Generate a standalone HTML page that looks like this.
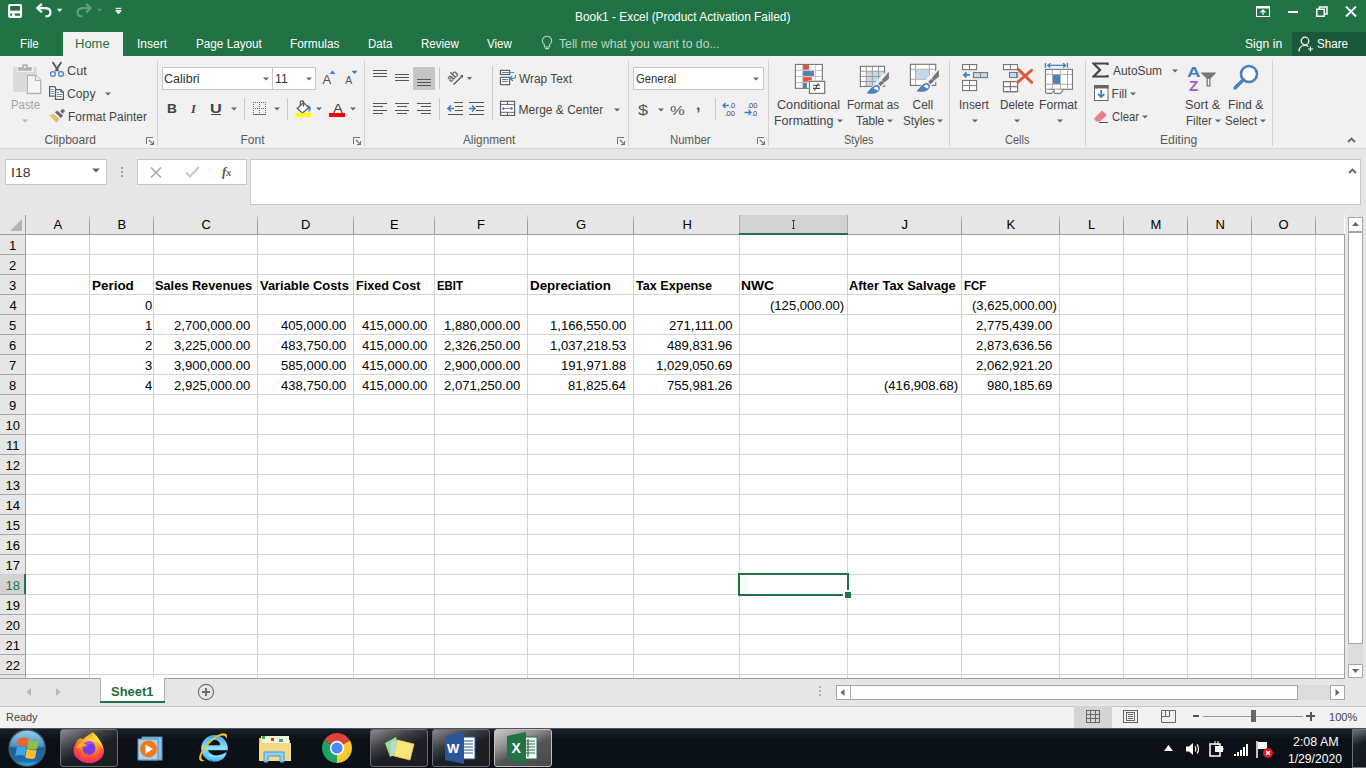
<!DOCTYPE html>
<html><head><meta charset="utf-8"><style>
html,body{margin:0;padding:0}
body{width:1366px;height:768px;position:relative;overflow:hidden;background:#fff;font-family:"Liberation Sans",sans-serif}
div{position:absolute;box-sizing:border-box}
.t{position:absolute;white-space:nowrap;line-height:0;display:block}
</style></head><body>
<div style="left:0px;top:0px;width:1366px;height:56px;background:#217346"></div>
<div style="left:0px;top:56px;width:1366px;height:92px;background:#f1f1f1"></div>
<div style="left:0px;top:148px;width:1366px;height:1px;background:#d5d5d5"></div>
<div style="left:0px;top:149px;width:1366px;height:66px;background:#e6e6e6"></div>
<div style="left:5px;top:159px;width:102px;height:26px;background:#fff;border:1px solid #c6c6c6"></div>
<div style="left:137px;top:159px;width:110px;height:26px;background:#fff;border:1px solid #c6c6c6"></div>
<div style="left:250px;top:159px;width:1111px;height:46px;background:#fff;border:1px solid #c6c6c6"></div>
<div style="left:0px;top:215px;width:1344px;height:19px;background:#e6e6e6"></div>
<div style="left:0px;top:234px;width:25px;height:444px;background:#e6e6e6"></div>
<div style="left:0px;top:234px;width:1344px;height:1px;background:#9e9e9e"></div>
<div style="left:0px;top:254px;width:25px;height:1px;background:#a8a8a8"></div>
<div style="left:26px;top:254px;width:1318px;height:1px;background:#d4d4d4"></div>
<div style="left:0px;top:274px;width:25px;height:1px;background:#a8a8a8"></div>
<div style="left:26px;top:274px;width:1318px;height:1px;background:#d4d4d4"></div>
<div style="left:0px;top:294px;width:25px;height:1px;background:#a8a8a8"></div>
<div style="left:26px;top:294px;width:1318px;height:1px;background:#d4d4d4"></div>
<div style="left:0px;top:314px;width:25px;height:1px;background:#a8a8a8"></div>
<div style="left:26px;top:314px;width:1318px;height:1px;background:#d4d4d4"></div>
<div style="left:0px;top:334px;width:25px;height:1px;background:#a8a8a8"></div>
<div style="left:26px;top:334px;width:1318px;height:1px;background:#d4d4d4"></div>
<div style="left:0px;top:354px;width:25px;height:1px;background:#a8a8a8"></div>
<div style="left:26px;top:354px;width:1318px;height:1px;background:#d4d4d4"></div>
<div style="left:0px;top:374px;width:25px;height:1px;background:#a8a8a8"></div>
<div style="left:26px;top:374px;width:1318px;height:1px;background:#d4d4d4"></div>
<div style="left:0px;top:394px;width:25px;height:1px;background:#a8a8a8"></div>
<div style="left:26px;top:394px;width:1318px;height:1px;background:#d4d4d4"></div>
<div style="left:0px;top:414px;width:25px;height:1px;background:#a8a8a8"></div>
<div style="left:26px;top:414px;width:1318px;height:1px;background:#d4d4d4"></div>
<div style="left:0px;top:434px;width:25px;height:1px;background:#a8a8a8"></div>
<div style="left:26px;top:434px;width:1318px;height:1px;background:#d4d4d4"></div>
<div style="left:0px;top:454px;width:25px;height:1px;background:#a8a8a8"></div>
<div style="left:26px;top:454px;width:1318px;height:1px;background:#d4d4d4"></div>
<div style="left:0px;top:474px;width:25px;height:1px;background:#a8a8a8"></div>
<div style="left:26px;top:474px;width:1318px;height:1px;background:#d4d4d4"></div>
<div style="left:0px;top:494px;width:25px;height:1px;background:#a8a8a8"></div>
<div style="left:26px;top:494px;width:1318px;height:1px;background:#d4d4d4"></div>
<div style="left:0px;top:514px;width:25px;height:1px;background:#a8a8a8"></div>
<div style="left:26px;top:514px;width:1318px;height:1px;background:#d4d4d4"></div>
<div style="left:0px;top:534px;width:25px;height:1px;background:#a8a8a8"></div>
<div style="left:26px;top:534px;width:1318px;height:1px;background:#d4d4d4"></div>
<div style="left:0px;top:554px;width:25px;height:1px;background:#a8a8a8"></div>
<div style="left:26px;top:554px;width:1318px;height:1px;background:#d4d4d4"></div>
<div style="left:0px;top:574px;width:25px;height:1px;background:#a8a8a8"></div>
<div style="left:26px;top:574px;width:1318px;height:1px;background:#d4d4d4"></div>
<div style="left:0px;top:594px;width:25px;height:1px;background:#a8a8a8"></div>
<div style="left:26px;top:594px;width:1318px;height:1px;background:#d4d4d4"></div>
<div style="left:0px;top:614px;width:25px;height:1px;background:#a8a8a8"></div>
<div style="left:26px;top:614px;width:1318px;height:1px;background:#d4d4d4"></div>
<div style="left:0px;top:634px;width:25px;height:1px;background:#a8a8a8"></div>
<div style="left:26px;top:634px;width:1318px;height:1px;background:#d4d4d4"></div>
<div style="left:0px;top:654px;width:25px;height:1px;background:#a8a8a8"></div>
<div style="left:26px;top:654px;width:1318px;height:1px;background:#d4d4d4"></div>
<div style="left:0px;top:674px;width:25px;height:1px;background:#a8a8a8"></div>
<div style="left:26px;top:674px;width:1318px;height:1px;background:#d4d4d4"></div>
<div style="left:25px;top:215px;width:1px;height:463px;background:#9e9e9e"></div>
<div style="left:89px;top:215px;width:1px;height:19px;background:linear-gradient(#d0d0d0,#a0a0a0 40%,#9a9a9a)"></div>
<div style="left:89px;top:235px;width:1px;height:443px;background:#d4d4d4"></div>
<div style="left:153px;top:215px;width:1px;height:19px;background:linear-gradient(#d0d0d0,#a0a0a0 40%,#9a9a9a)"></div>
<div style="left:153px;top:235px;width:1px;height:443px;background:#d4d4d4"></div>
<div style="left:257px;top:215px;width:1px;height:19px;background:linear-gradient(#d0d0d0,#a0a0a0 40%,#9a9a9a)"></div>
<div style="left:257px;top:235px;width:1px;height:443px;background:#d4d4d4"></div>
<div style="left:353px;top:215px;width:1px;height:19px;background:linear-gradient(#d0d0d0,#a0a0a0 40%,#9a9a9a)"></div>
<div style="left:353px;top:235px;width:1px;height:443px;background:#d4d4d4"></div>
<div style="left:434px;top:215px;width:1px;height:19px;background:linear-gradient(#d0d0d0,#a0a0a0 40%,#9a9a9a)"></div>
<div style="left:434px;top:235px;width:1px;height:443px;background:#d4d4d4"></div>
<div style="left:527px;top:215px;width:1px;height:19px;background:linear-gradient(#d0d0d0,#a0a0a0 40%,#9a9a9a)"></div>
<div style="left:527px;top:235px;width:1px;height:443px;background:#d4d4d4"></div>
<div style="left:633px;top:215px;width:1px;height:19px;background:linear-gradient(#d0d0d0,#a0a0a0 40%,#9a9a9a)"></div>
<div style="left:633px;top:235px;width:1px;height:443px;background:#d4d4d4"></div>
<div style="left:739px;top:215px;width:1px;height:19px;background:linear-gradient(#d0d0d0,#a0a0a0 40%,#9a9a9a)"></div>
<div style="left:739px;top:235px;width:1px;height:443px;background:#d4d4d4"></div>
<div style="left:847px;top:215px;width:1px;height:19px;background:linear-gradient(#d0d0d0,#a0a0a0 40%,#9a9a9a)"></div>
<div style="left:847px;top:235px;width:1px;height:443px;background:#d4d4d4"></div>
<div style="left:961px;top:215px;width:1px;height:19px;background:linear-gradient(#d0d0d0,#a0a0a0 40%,#9a9a9a)"></div>
<div style="left:961px;top:235px;width:1px;height:443px;background:#d4d4d4"></div>
<div style="left:1059px;top:215px;width:1px;height:19px;background:linear-gradient(#d0d0d0,#a0a0a0 40%,#9a9a9a)"></div>
<div style="left:1059px;top:235px;width:1px;height:443px;background:#d4d4d4"></div>
<div style="left:1123px;top:215px;width:1px;height:19px;background:linear-gradient(#d0d0d0,#a0a0a0 40%,#9a9a9a)"></div>
<div style="left:1123px;top:235px;width:1px;height:443px;background:#d4d4d4"></div>
<div style="left:1187px;top:215px;width:1px;height:19px;background:linear-gradient(#d0d0d0,#a0a0a0 40%,#9a9a9a)"></div>
<div style="left:1187px;top:235px;width:1px;height:443px;background:#d4d4d4"></div>
<div style="left:1251px;top:215px;width:1px;height:19px;background:linear-gradient(#d0d0d0,#a0a0a0 40%,#9a9a9a)"></div>
<div style="left:1251px;top:235px;width:1px;height:443px;background:#d4d4d4"></div>
<div style="left:1315px;top:215px;width:1px;height:19px;background:linear-gradient(#d0d0d0,#a0a0a0 40%,#9a9a9a)"></div>
<div style="left:1315px;top:235px;width:1px;height:443px;background:#d4d4d4"></div>
<div style="left:739px;top:215px;width:109px;height:19px;background:#d2d2d2;border-left:1px solid #ababab;border-right:1px solid #ababab"></div>
<div style="left:739px;top:233px;width:109px;height:2px;background:#217346"></div>
<div style="left:0px;top:574px;width:25px;height:20px;background:#d2d2d2"></div>
<div style="left:24px;top:574px;width:2px;height:20px;background:#217346"></div>
<span class="t" style="left:53.50px;top:225.00px;font-size:13px;color:#000;">A</span>
<span class="t" style="left:117.50px;top:225.00px;font-size:13px;color:#000;">B</span>
<span class="t" style="left:201.50px;top:225.00px;font-size:13px;color:#000;">C</span>
<span class="t" style="left:301.00px;top:225.00px;font-size:13px;color:#000;">D</span>
<span class="t" style="left:390.00px;top:225.00px;font-size:13px;color:#000;">E</span>
<span class="t" style="left:477.00px;top:225.00px;font-size:13px;color:#000;">F</span>
<span class="t" style="left:576.00px;top:225.00px;font-size:13px;color:#000;">G</span>
<span class="t" style="left:682.50px;top:225.00px;font-size:13px;color:#000;">H</span>
<div style="left:792px;top:220px;width:3px;height:1px;background:#26543a"></div><div style="left:793px;top:220px;width:1.3px;height:9px;background:#26543a"></div><div style="left:792px;top:228px;width:3px;height:1px;background:#26543a"></div>
<span class="t" style="left:901.50px;top:225.00px;font-size:13px;color:#000;">J</span>
<span class="t" style="left:1006.50px;top:225.00px;font-size:13px;color:#000;">K</span>
<span class="t" style="left:1088.00px;top:225.00px;font-size:13px;color:#000;">L</span>
<span class="t" style="left:1150.50px;top:225.00px;font-size:13px;color:#000;">M</span>
<span class="t" style="left:1215.50px;top:225.00px;font-size:13px;color:#000;">N</span>
<span class="t" style="left:1278.50px;top:225.00px;font-size:13px;color:#000;">O</span>
<span class="t" style="left:9.00px;top:246.00px;font-size:13px;color:#000;">1</span>
<span class="t" style="left:9.00px;top:266.00px;font-size:13px;color:#000;">2</span>
<span class="t" style="left:9.00px;top:286.00px;font-size:13px;color:#000;">3</span>
<span class="t" style="left:9.50px;top:306.00px;font-size:13px;color:#000;">4</span>
<span class="t" style="left:9.00px;top:326.00px;font-size:13px;color:#000;">5</span>
<span class="t" style="left:9.00px;top:346.00px;font-size:13px;color:#000;">6</span>
<span class="t" style="left:9.00px;top:366.00px;font-size:13px;color:#000;">7</span>
<span class="t" style="left:9.00px;top:386.00px;font-size:13px;color:#000;">8</span>
<span class="t" style="left:9.00px;top:406.00px;font-size:13px;color:#000;">9</span>
<span class="t" style="left:5.50px;top:426.00px;font-size:13px;color:#000;">10</span>
<span class="t" style="left:6.00px;top:446.00px;font-size:13px;color:#000;">11</span>
<span class="t" style="left:5.50px;top:466.00px;font-size:13px;color:#000;">12</span>
<span class="t" style="left:5.50px;top:486.00px;font-size:13px;color:#000;">13</span>
<span class="t" style="left:5.50px;top:506.00px;font-size:13px;color:#000;">14</span>
<span class="t" style="left:5.50px;top:526.00px;font-size:13px;color:#000;">15</span>
<span class="t" style="left:5.50px;top:546.00px;font-size:13px;color:#000;">16</span>
<span class="t" style="left:5.50px;top:566.00px;font-size:13px;color:#000;">17</span>
<span class="t" style="left:5.50px;top:586.00px;font-size:13px;color:#217346;">18</span>
<span class="t" style="left:5.50px;top:606.00px;font-size:13px;color:#000;">19</span>
<span class="t" style="left:5.50px;top:626.00px;font-size:13px;color:#000;">20</span>
<span class="t" style="left:5.50px;top:646.00px;font-size:13px;color:#000;">21</span>
<span class="t" style="left:5.50px;top:666.00px;font-size:13px;color:#000;">22</span>
<div style="left:738px;top:573px;width:111px;height:23px;border:2px solid #217346"></div>
<div style="left:843px;top:590px;width:8px;height:8px;background:#fff"></div>
<div style="left:844.5px;top:591.5px;width:6px;height:6px;background:#217346"></div>
<span class="t" style="left:91.60px;top:286.00px;font-size:13.5px;color:#000;font-weight:bold;transform:scaleX(0.9950);transform-origin:left;">Period</span>
<span class="t" style="left:155.05px;top:286.00px;font-size:13.5px;color:#000;font-weight:bold;transform:scaleX(0.9455);transform-origin:left;">Sales Revenues</span>
<span class="t" style="left:259.90px;top:286.00px;font-size:13.5px;color:#000;font-weight:bold;transform:scaleX(0.9543);transform-origin:left;">Variable Costs</span>
<span class="t" style="left:355.77px;top:286.00px;font-size:13.5px;color:#000;font-weight:bold;transform:scaleX(0.9324);transform-origin:left;">Fixed Cost</span>
<span class="t" style="left:436.86px;top:286.00px;font-size:13.5px;color:#000;font-weight:bold;transform:scaleX(0.8400);transform-origin:left;">EBIT</span>
<span class="t" style="left:529.61px;top:286.00px;font-size:13.5px;color:#000;font-weight:bold;transform:scaleX(0.9888);transform-origin:left;">Depreciation</span>
<span class="t" style="left:635.80px;top:286.00px;font-size:13.5px;color:#000;font-weight:bold;transform:scaleX(0.9333);transform-origin:left;">Tax Expense</span>
<span class="t" style="left:741.47px;top:286.00px;font-size:13.5px;color:#000;font-weight:bold;transform:scaleX(1.0258);transform-origin:left;">NWC</span>
<span class="t" style="left:848.95px;top:286.00px;font-size:13.5px;color:#000;font-weight:bold;transform:scaleX(0.9505);transform-origin:left;">After Tax Salvage</span>
<span class="t" style="left:963.65px;top:286.00px;font-size:13.5px;color:#000;font-weight:bold;transform:scaleX(0.8520);transform-origin:left;">FCF</span>
<span class="t" style="left:144.53px;top:306.00px;font-size:13.5px;color:#000;transform:scaleX(0.9675);transform-origin:left;">0</span>
<span class="t" style="left:770.17px;top:306.00px;font-size:13.5px;color:#000;transform:scaleX(0.9675);transform-origin:left;">(125,000.00)</span>
<span class="t" style="left:971.52px;top:306.00px;font-size:13.5px;color:#000;transform:scaleX(0.9675);transform-origin:left;">(3,625,000.00)</span>
<span class="t" style="left:144.53px;top:326.00px;font-size:13.5px;color:#000;transform:scaleX(0.9675);transform-origin:left;">1</span>
<span class="t" style="left:174.13px;top:326.00px;font-size:13.5px;color:#000;transform:scaleX(0.9675);transform-origin:left;">2,700,000.00</span>
<span class="t" style="left:280.78px;top:326.00px;font-size:13.5px;color:#000;transform:scaleX(0.9675);transform-origin:left;">405,000.00</span>
<span class="t" style="left:361.78px;top:326.00px;font-size:13.5px;color:#000;transform:scaleX(0.9675);transform-origin:left;">415,000.00</span>
<span class="t" style="left:444.13px;top:326.00px;font-size:13.5px;color:#000;transform:scaleX(0.9675);transform-origin:left;">1,880,000.00</span>
<span class="t" style="left:550.13px;top:326.00px;font-size:13.5px;color:#000;transform:scaleX(0.9675);transform-origin:left;">1,166,550.00</span>
<span class="t" style="left:668.71px;top:326.00px;font-size:13.5px;color:#000;transform:scaleX(0.9675);transform-origin:left;">271,111.00</span>
<span class="t" style="left:976.13px;top:326.00px;font-size:13.5px;color:#000;transform:scaleX(0.9675);transform-origin:left;">2,775,439.00</span>
<span class="t" style="left:144.53px;top:346.00px;font-size:13.5px;color:#000;transform:scaleX(0.9675);transform-origin:left;">2</span>
<span class="t" style="left:174.13px;top:346.00px;font-size:13.5px;color:#000;transform:scaleX(0.9675);transform-origin:left;">3,225,000.00</span>
<span class="t" style="left:280.78px;top:346.00px;font-size:13.5px;color:#000;transform:scaleX(0.9675);transform-origin:left;">483,750.00</span>
<span class="t" style="left:361.78px;top:346.00px;font-size:13.5px;color:#000;transform:scaleX(0.9675);transform-origin:left;">415,000.00</span>
<span class="t" style="left:444.13px;top:346.00px;font-size:13.5px;color:#000;transform:scaleX(0.9675);transform-origin:left;">2,326,250.00</span>
<span class="t" style="left:550.13px;top:346.00px;font-size:13.5px;color:#000;transform:scaleX(0.9675);transform-origin:left;">1,037,218.53</span>
<span class="t" style="left:666.78px;top:346.00px;font-size:13.5px;color:#000;transform:scaleX(0.9675);transform-origin:left;">489,831.96</span>
<span class="t" style="left:976.13px;top:346.00px;font-size:13.5px;color:#000;transform:scaleX(0.9675);transform-origin:left;">2,873,636.56</span>
<span class="t" style="left:144.53px;top:366.00px;font-size:13.5px;color:#000;transform:scaleX(0.9675);transform-origin:left;">3</span>
<span class="t" style="left:174.13px;top:366.00px;font-size:13.5px;color:#000;transform:scaleX(0.9675);transform-origin:left;">3,900,000.00</span>
<span class="t" style="left:280.78px;top:366.00px;font-size:13.5px;color:#000;transform:scaleX(0.9675);transform-origin:left;">585,000.00</span>
<span class="t" style="left:361.78px;top:366.00px;font-size:13.5px;color:#000;transform:scaleX(0.9675);transform-origin:left;">415,000.00</span>
<span class="t" style="left:444.13px;top:366.00px;font-size:13.5px;color:#000;transform:scaleX(0.9675);transform-origin:left;">2,900,000.00</span>
<span class="t" style="left:560.78px;top:366.00px;font-size:13.5px;color:#000;transform:scaleX(0.9675);transform-origin:left;">191,971.88</span>
<span class="t" style="left:656.13px;top:366.00px;font-size:13.5px;color:#000;transform:scaleX(0.9675);transform-origin:left;">1,029,050.69</span>
<span class="t" style="left:976.13px;top:366.00px;font-size:13.5px;color:#000;transform:scaleX(0.9675);transform-origin:left;">2,062,921.20</span>
<span class="t" style="left:144.53px;top:386.00px;font-size:13.5px;color:#000;transform:scaleX(0.9675);transform-origin:left;">4</span>
<span class="t" style="left:174.13px;top:386.00px;font-size:13.5px;color:#000;transform:scaleX(0.9675);transform-origin:left;">2,925,000.00</span>
<span class="t" style="left:280.78px;top:386.00px;font-size:13.5px;color:#000;transform:scaleX(0.9675);transform-origin:left;">438,750.00</span>
<span class="t" style="left:361.78px;top:386.00px;font-size:13.5px;color:#000;transform:scaleX(0.9675);transform-origin:left;">415,000.00</span>
<span class="t" style="left:444.13px;top:386.00px;font-size:13.5px;color:#000;transform:scaleX(0.9675);transform-origin:left;">2,071,250.00</span>
<span class="t" style="left:567.55px;top:386.00px;font-size:13.5px;color:#000;transform:scaleX(0.9675);transform-origin:left;">81,825.64</span>
<span class="t" style="left:666.78px;top:386.00px;font-size:13.5px;color:#000;transform:scaleX(0.9675);transform-origin:left;">755,981.26</span>
<span class="t" style="left:986.78px;top:386.00px;font-size:13.5px;color:#000;transform:scaleX(0.9675);transform-origin:left;">980,185.69</span>
<span class="t" style="left:884.17px;top:386.00px;font-size:13.5px;color:#000;transform:scaleX(0.9675);transform-origin:left;">(416,908.68)</span>
<svg style="position:absolute;left:0px;top:0px" width="130" height="30" viewBox="0 0 1366 315"><rect x="96" y="52" width="125" height="125" rx="8" fill="none" stroke="#fff" stroke-width="22"/><rect x="90" y="112" width="137" height="30" fill="#fff"/><rect x="128" y="140" width="28" height="40" fill="#fff"/><path d="M400 85H470Q530 85 530 130Q530 172 478 172" fill="none" stroke="#fff" stroke-width="24"/><path d="M440 40L393 85L440 130" fill="none" stroke="#fff" stroke-width="24"/><path d="M598 92H655L626 127Z" fill="#fff"/><path d="M945 85H875Q815 85 815 130Q815 172 867 172" fill="none" stroke="#5e9f7c" stroke-width="24"/><path d="M905 40L952 85L905 130" fill="none" stroke="#5e9f7c" stroke-width="24"/><path d="M1018 92H1075L1046 127Z" fill="#4e9470"/><rect x="1215" y="82" width="60" height="11" fill="#fff"/><rect x="1215" y="104" width="60" height="11" fill="#fff"/><path d="M1213 118H1277L1245 150Z" fill="#fff"/></svg>
<span class="t" style="left:575.01px;top:16.50px;font-size:12px;color:#fff;transform:scaleX(0.9907);transform-origin:left;">Book1 - Excel (Product Activation Failed)</span>
<svg style="position:absolute;left:1256px;top:6px;" width="14" height="11" viewBox="0 0 14 11"><rect x="0.5" y="0.5" width="13" height="10" fill="none" stroke="#fff"/><rect x="0.5" y="0.5" width="13" height="2" fill="#fff"/><path d="M7 4V9M4.5 6.5L7 4L9.5 6.5" fill="none" stroke="#fff" stroke-width="1.2"/></svg>
<div style="left:1288px;top:11px;width:10px;height:2px;background:#fff"></div>
<svg style="position:absolute;left:1316px;top:6px;" width="12" height="11" viewBox="0 0 12 11"><rect x="0.75" y="3.25" width="7.5" height="7" fill="none" stroke="#fff" stroke-width="1.5"/><path d="M3.5 3V1H11V8H8.5" fill="none" stroke="#fff" stroke-width="1.5"/></svg>
<svg style="position:absolute;left:1345px;top:6px;" width="12" height="11" viewBox="0 0 12 11"><path d="M1 0.5L11 10.5M11 0.5L1 10.5" stroke="#fff" stroke-width="1.9"/></svg>
<div style="left:63px;top:32px;width:60px;height:24px;background:#f1f1f1"></div>
<span class="t" style="left:19.53px;top:44.00px;font-size:12px;color:#fff;transform:scaleX(0.9722);transform-origin:left;">File</span>
<span class="t" style="left:75.42px;top:44.00px;font-size:12px;color:#217346;transform:scaleX(1.0833);transform-origin:left;">Home</span>
<span class="t" style="left:137.00px;top:44.00px;font-size:12px;color:#fff;">Insert</span>
<span class="t" style="left:195.52px;top:44.00px;font-size:12px;color:#fff;transform:scaleX(0.9773);transform-origin:left;">Page Layout</span>
<span class="t" style="left:289.51px;top:44.00px;font-size:12px;color:#fff;transform:scaleX(0.9898);transform-origin:left;">Formulas</span>
<span class="t" style="left:367.54px;top:44.00px;font-size:12px;color:#fff;transform:scaleX(0.9583);transform-origin:left;">Data</span>
<span class="t" style="left:420.54px;top:44.00px;font-size:12px;color:#fff;transform:scaleX(0.9605);transform-origin:left;">Review</span>
<span class="t" style="left:487.00px;top:44.00px;font-size:12px;color:#fff;transform:scaleX(0.9615);transform-origin:left;">View</span>
<svg style="position:absolute;left:541px;top:35px;" width="12" height="16" viewBox="0 0 12 16"><path d="M6 1.2A4.6 4.6 0 0 0 3.4 9.6V12H8.6V9.6A4.6 4.6 0 0 0 6 1.2Z" fill="none" stroke="#b9d7c6" stroke-width="1.1"/><path d="M4 13.6H8" stroke="#b9d7c6" stroke-width="1.2"/></svg>
<span class="t" style="left:558.50px;top:44.00px;font-size:12px;color:#b9d7c6;transform:scaleX(1.0159);transform-origin:left;">Tell me what you want to do...</span>
<span class="t" style="left:1244.99px;top:44.00px;font-size:12px;color:#fff;transform:scaleX(1.0143);transform-origin:left;">Sign in</span>
<div style="left:1292px;top:32px;width:74px;height:24px;background:#19593a"></div>
<svg style="position:absolute;left:1298px;top:36px;" width="17" height="16" viewBox="0 0 17 16"><circle cx="7" cy="5" r="3.8" fill="none" stroke="#fff" stroke-width="1.2"/><path d="M1 15.5C1 11.5 3.5 9.5 7 9.5C8.5 9.5 9.5 9.8 10.5 10.5" fill="none" stroke="#fff" stroke-width="1.2"/><path d="M12.5 10.5V15.5M10 13H15" stroke="#fff" stroke-width="1.2"/></svg>
<span class="t" style="left:1317.03px;top:44.00px;font-size:12px;color:#fff;transform:scaleX(0.9667);transform-origin:left;">Share</span>
<div style="left:157px;top:60px;width:1px;height:86px;background:#d5d5d5"></div>
<div style="left:364px;top:60px;width:1px;height:86px;background:#d5d5d5"></div>
<div style="left:628px;top:60px;width:1px;height:86px;background:#d5d5d5"></div>
<div style="left:768px;top:60px;width:1px;height:86px;background:#d5d5d5"></div>
<div style="left:949px;top:60px;width:1px;height:86px;background:#d5d5d5"></div>
<div style="left:1085px;top:60px;width:1px;height:86px;background:#d5d5d5"></div>
<div style="left:1272px;top:60px;width:1px;height:86px;background:#d5d5d5"></div>
<span class="t" style="left:44.50px;top:140.00px;font-size:12px;color:#595959;">Clipboard</span>
<span class="t" style="left:240.50px;top:140.00px;font-size:12px;color:#595959;">Font</span>
<span class="t" style="left:462.50px;top:140.00px;font-size:12px;color:#595959;transform:scaleX(0.9811);transform-origin:left;">Alignment</span>
<span class="t" style="left:669.55px;top:140.00px;font-size:12px;color:#595959;transform:scaleX(0.9524);transform-origin:left;">Number</span>
<span class="t" style="left:843.60px;top:140.00px;font-size:12px;color:#595959;transform:scaleX(0.9032);transform-origin:left;">Styles</span>
<span class="t" style="left:1004.58px;top:140.00px;font-size:12px;color:#595959;transform:scaleX(0.9200);transform-origin:left;">Cells</span>
<span class="t" style="left:1159.99px;top:140.00px;font-size:12px;color:#595959;transform:scaleX(1.0143);transform-origin:left;">Editing</span>
<svg style="position:absolute;left:146px;top:137px;" width="8" height="8" viewBox="0 0 8 8"><path d="M0.5 7V0.5H7" fill="none" stroke="#777" stroke-width="1"/><path d="M3 3L7.5 7.5M7.5 4V7.5H4" fill="none" stroke="#777" stroke-width="1.1"/></svg>
<svg style="position:absolute;left:353px;top:137px;" width="8" height="8" viewBox="0 0 8 8"><path d="M0.5 7V0.5H7" fill="none" stroke="#777" stroke-width="1"/><path d="M3 3L7.5 7.5M7.5 4V7.5H4" fill="none" stroke="#777" stroke-width="1.1"/></svg>
<svg style="position:absolute;left:617px;top:137px;" width="8" height="8" viewBox="0 0 8 8"><path d="M0.5 7V0.5H7" fill="none" stroke="#777" stroke-width="1"/><path d="M3 3L7.5 7.5M7.5 4V7.5H4" fill="none" stroke="#777" stroke-width="1.1"/></svg>
<svg style="position:absolute;left:757px;top:137px;" width="8" height="8" viewBox="0 0 8 8"><path d="M0.5 7V0.5H7" fill="none" stroke="#777" stroke-width="1"/><path d="M3 3L7.5 7.5M7.5 4V7.5H4" fill="none" stroke="#777" stroke-width="1.1"/></svg>
<svg style="position:absolute;left:1347px;top:137px;" width="9" height="6" viewBox="0 0 9 6"><path d="M1 5L4.5 1.5L8 5" fill="none" stroke="#666" stroke-width="1.9"/></svg>
<svg style="position:absolute;left:6px;top:60px" width="40" height="36" viewBox="0 0 853 768"><rect x="150" y="145" width="510" height="535" rx="40" fill="#dcd8dc"/><rect x="235" y="130" width="345" height="125" fill="#f1f1f1"/><rect x="255" y="150" width="295" height="80" rx="12" fill="#b3b3b3"/><rect x="345" y="90" width="120" height="90" rx="25" fill="#b3b3b3"/><circle cx="405" cy="150" r="20" fill="#fff"/><path d="M430 300H640L765 425V740H430Z" fill="#f1f1f1"/><path d="M455 325H630L740 435V715H455Z" fill="#f5f2f5" stroke="#b3b3b3" stroke-width="28"/><path d="M630 325V435H740" fill="#fff" stroke="#b3b3b3" stroke-width="28"/></svg>
<span class="t" style="left:11.05px;top:105.00px;font-size:12px;color:#a3a3a3;transform:scaleX(0.9483);transform-origin:left;">Paste</span>
<svg style="position:absolute;left:22px;top:119px;" width="6" height="4" viewBox="0 0 6 4"><path d="M0 0.5H6L3 3.5Z" fill="#b3b3b3"/></svg>
<svg style="position:absolute;left:44px;top:58px" width="26" height="24" viewBox="0 0 832 768"><path d="M290 150L450 400M540 150L380 400" stroke="#5a5a5a" stroke-width="62" stroke-linecap="round"/><circle cx="285" cy="510" r="78" fill="none" stroke="#3e7fc1" stroke-width="40"/><circle cx="545" cy="510" r="78" fill="none" stroke="#3e7fc1" stroke-width="40"/></svg>
<span class="t" style="left:67.44px;top:71.00px;font-size:12px;color:#444444;transform:scaleX(1.0588);transform-origin:left;">Cut</span>
<svg style="position:absolute;left:44px;top:82px" width="26" height="24" viewBox="0 0 832 768"><path d="M180 145H335L370 180V455H180Z" fill="#fff" stroke="#5a5a5a" stroke-width="40"/><path d="M230 238H290M230 302H315M230 366H315" stroke="#3e7fc1" stroke-width="28" stroke-linecap="round"/><path d="M345 225H545L640 320V570H345Z" fill="#f1f1f1"/><path d="M370 245H535L620 330V555H370Z" fill="#fff" stroke="#5a5a5a" stroke-width="40"/><path d="M535 245V320H620" fill="none" stroke="#5a5a5a" stroke-width="34"/><path d="M425 333H470M425 400H565M425 464H565" stroke="#3e7fc1" stroke-width="28" stroke-linecap="round"/></svg>
<span class="t" style="left:67.48px;top:94.00px;font-size:12px;color:#444444;transform:scaleX(1.0185);transform-origin:left;">Copy</span>
<svg style="position:absolute;left:105px;top:92px;" width="6" height="4" viewBox="0 0 6 4"><path d="M0 0.5H6L3 3.5Z" fill="#666"/></svg>
<svg style="position:absolute;left:44px;top:104px" width="26" height="24" viewBox="0 0 832 768"><path d="M165 360L300 315L500 480L400 600Z" fill="#e3bd72"/><path d="M360 265L420 220L600 370L540 440Z" fill="#666" stroke="#666" stroke-width="20" stroke-linejoin="round"/><path d="M530 225L600 165L665 215L595 300Z" fill="#666" stroke="#666" stroke-width="18" stroke-linejoin="round"/></svg>
<span class="t" style="left:67.51px;top:117.00px;font-size:12px;color:#444444;transform:scaleX(0.9936);transform-origin:left;">Format Painter</span>
<div style="left:162px;top:67px;width:154px;height:23px;background:#fff;border:1px solid #c6c6c6"></div>
<div style="left:272px;top:67px;width:1px;height:23px;background:#c6c6c6"></div>
<span class="t" style="left:164.45px;top:79.00px;font-size:12px;color:#333;transform:scaleX(1.0469);transform-origin:left;">Calibri</span>
<svg style="position:absolute;left:263px;top:77px;" width="6" height="4" viewBox="0 0 6 4"><path d="M0 0.5H6L3 3.5Z" fill="#666"/></svg>
<span class="t" style="left:274.68px;top:79.00px;font-size:12px;color:#333;transform:scaleX(1.0182);transform-origin:left;">11</span>
<svg style="position:absolute;left:306px;top:77px;" width="6" height="4" viewBox="0 0 6 4"><path d="M0 0.5H6L3 3.5Z" fill="#666"/></svg>
<span class="t" style="left:322.50px;top:80.00px;font-size:13px;color:#555;">A</span>
<svg style="position:absolute;left:329px;top:70px;" width="7" height="5" viewBox="0 0 7 5"><path d="M0.5 4H6.5L3.5 0.5Z" fill="#3e7fc1"/></svg>
<span class="t" style="left:345.30px;top:80.00px;font-size:10.5px;color:#555;">A</span>
<svg style="position:absolute;left:351px;top:70px;" width="7" height="5" viewBox="0 0 7 5"><path d="M0.5 0.8H6.5L3.5 4Z" fill="#3e7fc1"/></svg>
<span class="t" style="left:167.36px;top:109.00px;font-size:12px;color:#444;font-weight:bold;transform:scaleX(1.1429);transform-origin:left;">B</span>
<span class="t" style="left:191px;top:109px;font-size:12.5px;color:#444;font-style:italic;font-family:'Liberation Serif';font-weight:bold">I</span>
<span class="t" style="left:210.14px;top:109.00px;font-size:12px;color:#444;font-weight:bold;transform:scaleX(1.3571);transform-origin:left;">U</span>
<div style="left:211px;top:114px;width:10px;height:1px;background:#444"></div>
<svg style="position:absolute;left:231px;top:107px;" width="6" height="4" viewBox="0 0 6 4"><path d="M0 0.5H6L3 3.5Z" fill="#666"/></svg>
<div style="left:244px;top:98px;width:1px;height:22px;background:#c8c8c8"></div>
<svg style="position:absolute;left:252px;top:101px;" width="15" height="15" viewBox="0 0 15 15"><rect x="1" y="1" width="1" height="1" fill="#6a6a6a"/><rect x="3" y="1" width="1" height="1" fill="#6a6a6a"/><rect x="5" y="1" width="1" height="1" fill="#6a6a6a"/><rect x="7" y="1" width="1" height="1" fill="#6a6a6a"/><rect x="9" y="1" width="1" height="1" fill="#6a6a6a"/><rect x="11" y="1" width="1" height="1" fill="#6a6a6a"/><rect x="13" y="1" width="1" height="1" fill="#6a6a6a"/><rect x="1" y="3" width="1" height="1" fill="#6a6a6a"/><rect x="7" y="3" width="1" height="1" fill="#6a6a6a"/><rect x="13" y="3" width="1" height="1" fill="#6a6a6a"/><rect x="1" y="5" width="1" height="1" fill="#6a6a6a"/><rect x="7" y="5" width="1" height="1" fill="#6a6a6a"/><rect x="13" y="5" width="1" height="1" fill="#6a6a6a"/><rect x="1" y="7" width="1" height="1" fill="#6a6a6a"/><rect x="3" y="7" width="1" height="1" fill="#6a6a6a"/><rect x="5" y="7" width="1" height="1" fill="#6a6a6a"/><rect x="7" y="7" width="1" height="1" fill="#6a6a6a"/><rect x="9" y="7" width="1" height="1" fill="#6a6a6a"/><rect x="11" y="7" width="1" height="1" fill="#6a6a6a"/><rect x="13" y="7" width="1" height="1" fill="#6a6a6a"/><rect x="1" y="9" width="1" height="1" fill="#6a6a6a"/><rect x="7" y="9" width="1" height="1" fill="#6a6a6a"/><rect x="13" y="9" width="1" height="1" fill="#6a6a6a"/><rect x="1" y="11" width="1" height="1" fill="#6a6a6a"/><rect x="7" y="11" width="1" height="1" fill="#6a6a6a"/><rect x="13" y="11" width="1" height="1" fill="#6a6a6a"/><rect x="1" y="13" width="1" height="1" fill="#6a6a6a"/><rect x="7" y="13" width="1" height="1" fill="#6a6a6a"/><rect x="13" y="13" width="1" height="1" fill="#6a6a6a"/><rect x="1" y="13" width="13" height="1" fill="#6a6a6a"/></svg>
<svg style="position:absolute;left:274px;top:107px;" width="6" height="4" viewBox="0 0 6 4"><path d="M0 0.5H6L3 3.5Z" fill="#666"/></svg>
<div style="left:287px;top:98px;width:1px;height:22px;background:#c8c8c8"></div>
<svg style="position:absolute;left:290px;top:96px" width="36" height="24" viewBox="0 0 1152 768"><path d="M230 400L430 210L600 375L400 545Z" fill="#fff" stroke="#555" stroke-width="40" stroke-linejoin="miter"/><path d="M330 300V180Q330 165 350 165H420Q440 165 440 185V200M430 230V340" fill="none" stroke="#555" stroke-width="36"/><path d="M545 290C640 300 690 380 660 440C640 480 610 510 590 520C600 460 610 400 545 290Z" fill="#3e7fc1"/><rect x="160" y="540" width="510" height="130" fill="#ffff00"/></svg>
<svg style="position:absolute;left:316px;top:107px;" width="6" height="4" viewBox="0 0 6 4"><path d="M0 0.5H6L3 3.5Z" fill="#666"/></svg>
<span class="t" style="left:332.50px;top:109.00px;font-size:12.5px;color:#444;transform:scaleX(1.1875);transform-origin:left;">A</span>
<div style="left:329px;top:113px;width:16px;height:4px;background:#ff0000"></div>
<svg style="position:absolute;left:350px;top:107px;" width="6" height="4" viewBox="0 0 6 4"><path d="M0 0.5H6L3 3.5Z" fill="#666"/></svg>
<div style="left:373px;top:70px;width:14px;height:1px;background:#555"></div>
<div style="left:373px;top:73px;width:14px;height:1px;background:#555"></div>
<div style="left:373px;top:76px;width:14px;height:1px;background:#555"></div>
<div style="left:395px;top:74px;width:14px;height:1px;background:#555"></div>
<div style="left:395px;top:77px;width:14px;height:1px;background:#555"></div>
<div style="left:395px;top:80px;width:14px;height:1px;background:#555"></div>
<div style="left:413px;top:67px;width:22px;height:23px;background:#c5c5c5"></div>
<div style="left:417px;top:79px;width:14px;height:1px;background:#555"></div>
<div style="left:417px;top:82px;width:14px;height:1px;background:#555"></div>
<div style="left:417px;top:85px;width:14px;height:1px;background:#555"></div>
<div style="left:439px;top:67px;width:1px;height:22px;background:#c8c8c8"></div>
<svg style="position:absolute;left:442px;top:66px" width="36" height="24" viewBox="0 0 1152 768"><g transform="translate(340 330) rotate(-45)"><text x="0" y="100" text-anchor="middle" font-family="Liberation Sans" font-size="330" fill="#555" stroke="#555" stroke-width="8">ab</text></g><path d="M370 590L640 330" stroke="#555" stroke-width="40"/><path d="M580 290H670V380Z" fill="#555"/><path d="M800 355H960L880 445Z" fill="#666"/></svg>
<div style="left:492px;top:66px;width:1px;height:54px;background:#c8c8c8"></div>
<svg style="position:absolute;left:496px;top:66px" width="26" height="24" viewBox="0 0 832 768"><rect x="142" y="140" width="295" height="130" fill="#fff" stroke="#5a5a5a" stroke-width="36"/><rect x="142" y="362" width="295" height="235" fill="#fff" stroke="#5a5a5a" stroke-width="36"/><path d="M200 207H570M200 432H375M200 495H375" stroke="#3e7fc1" stroke-width="30" stroke-linecap="round"/><path d="M625 300V330Q625 400 540 400H440" fill="none" stroke="#3e7fc1" stroke-width="36" stroke-linecap="round"/><path d="M510 335L440 400L530 465" fill="none" stroke="#3e7fc1" stroke-width="40" stroke-linecap="round"/></svg>
<span class="t" style="left:519.00px;top:79.00px;font-size:12px;color:#444444;transform:scaleX(0.9906);transform-origin:left;">Wrap Text</span>
<div style="left:373px;top:103.0px;width:14px;height:1px;background:#555"></div>
<div style="left:373px;top:106.4px;width:10px;height:1px;background:#555"></div>
<div style="left:373px;top:109.8px;width:14px;height:1px;background:#555"></div>
<div style="left:373px;top:113.2px;width:10px;height:1px;background:#555"></div>
<div style="left:395px;top:103.0px;width:14px;height:1px;background:#555"></div>
<div style="left:397px;top:106.4px;width:10px;height:1px;background:#555"></div>
<div style="left:395px;top:109.8px;width:14px;height:1px;background:#555"></div>
<div style="left:397px;top:113.2px;width:10px;height:1px;background:#555"></div>
<div style="left:417px;top:103.0px;width:14px;height:1px;background:#555"></div>
<div style="left:421px;top:106.4px;width:10px;height:1px;background:#555"></div>
<div style="left:417px;top:109.8px;width:14px;height:1px;background:#555"></div>
<div style="left:421px;top:113.2px;width:10px;height:1px;background:#555"></div>
<div style="left:439px;top:98px;width:1px;height:22px;background:#c8c8c8"></div>
<svg style="position:absolute;left:447px;top:101px;" width="17" height="15" viewBox="0 0 17 15"><path d="M7 1.5H16M8 5.5H16M8 9.5H16M1 13.5H16" stroke="#555" stroke-width="1"/><path d="M1 7.5H7M4 4.5L1 7.5L4 10.5" fill="none" stroke="#3e7fc1" stroke-width="1.6"/></svg>
<svg style="position:absolute;left:468px;top:101px;" width="17" height="15" viewBox="0 0 17 15"><path d="M1 1.5H16M8 5.5H16M8 9.5H16M1 13.5H16" stroke="#555" stroke-width="1"/><path d="M1 7.5H7M4 4.5L7 7.5L4 10.5" fill="none" stroke="#3e7fc1" stroke-width="1.6"/></svg>
<div style="left:492px;top:66px;width:1px;height:54px;background:#c8c8c8"></div>
<svg style="position:absolute;left:496px;top:96px" width="26" height="24" viewBox="0 0 832 768"><rect x="145" y="170" width="450" height="450" fill="#fff" stroke="#5a5a5a" stroke-width="36"/><path d="M145 268H595M145 522H595M368 170V268M368 522V620" stroke="#5a5a5a" stroke-width="30"/><path d="M200 400H540M240 355V445M495 355V445" stroke="#3e7fc1" stroke-width="30"/><path d="M195 400L245 350V450ZM545 400L495 350V450Z" fill="#3e7fc1"/></svg>
<span class="t" style="left:518.50px;top:110.00px;font-size:12px;color:#444444;">Merge &amp; Center</span>
<svg style="position:absolute;left:614px;top:108px;" width="6" height="4" viewBox="0 0 6 4"><path d="M0 0.5H6L3 3.5Z" fill="#666"/></svg>
<div style="left:633px;top:67px;width:131px;height:23px;background:#fff;border:1px solid #c6c6c6"></div>
<span class="t" style="left:635.86px;top:79.00px;font-size:12px;color:#333;transform:scaleX(0.9415);transform-origin:left;">General</span>
<svg style="position:absolute;left:753px;top:77px;" width="6" height="4" viewBox="0 0 6 4"><path d="M0 0.5H6L3 3.5Z" fill="#666"/></svg>
<span class="t" style="left:638.21px;top:110.00px;font-size:14px;color:#555;transform:scaleX(1.2857);transform-origin:left;">$</span>
<svg style="position:absolute;left:658px;top:108px;" width="6" height="4" viewBox="0 0 6 4"><path d="M0 0.5H6L3 3.5Z" fill="#666"/></svg>
<span class="t" style="left:670.27px;top:111.00px;font-size:13.5px;color:#555;transform:scaleX(1.2273);transform-origin:left;">%</span>
<span class="t" style="left:696.00px;top:105.00px;font-size:16px;color:#555;font-weight:bold;">,</span>
<div style="left:715px;top:98px;width:1px;height:22px;background:#c8c8c8"></div>
<svg style="position:absolute;left:722px;top:101px;" width="17" height="16" viewBox="0 0 17 16"><path d="M1 4.5H7M3.5 2L1 4.5L3.5 7" fill="none" stroke="#3e7fc1" stroke-width="1.3"/><text x="7" y="7" font-family="Liberation Sans" font-size="7.5" fill="#444">.0</text><text x="2.5" y="14.5" font-family="Liberation Sans" font-size="7.5" fill="#444">.00</text></svg>
<svg style="position:absolute;left:743px;top:101px;" width="17" height="16" viewBox="0 0 17 16"><text x="4" y="7" font-family="Liberation Sans" font-size="7.5" fill="#444">.00</text><path d="M1.5 11.5H8M5.5 9L8 11.5L5.5 14" fill="none" stroke="#3e7fc1" stroke-width="1.3"/><text x="8" y="14.5" font-family="Liberation Sans" font-size="7.5" fill="#444">.0</text></svg>
<svg style="position:absolute;left:790px;top:60px" width="40" height="36" viewBox="0 0 853 768"><rect x="120" y="100" width="565" height="500" fill="#fff"/><rect x="275" y="105" width="130" height="105" fill="#e0573a"/><rect x="275" y="235" width="235" height="105" fill="#4a80bf"/><rect x="275" y="365" width="190" height="100" fill="#e0573a"/><rect x="275" y="490" width="85" height="110" fill="#4a80bf"/><path d="M270 90V610M540 90V610M110 220H695M110 350H695M110 480H695" stroke="#bdbdbd" stroke-width="20"/><rect x="115" y="95" width="575" height="510" fill="none" stroke="#777" stroke-width="24"/><rect x="395" y="435" width="365" height="300" fill="#f1f1f1"/><rect x="415" y="455" width="325" height="258" fill="#fff" stroke="#777" stroke-width="26"/><path d="M490 540H640M490 605H640M610 495L515 655" stroke="#444" stroke-width="22"/></svg>
<svg style="position:absolute;left:855px;top:60px" width="40" height="36" viewBox="0 0 853 768"><rect x="120" y="140" width="505" height="420" fill="#fff"/><rect x="245" y="245" width="380" height="315" fill="#c5d9ee"/><path d="M240 130V570M370 130V570M500 130V570M110 240H635M110 350H635M110 460H635" stroke="#999" stroke-width="22"/><rect x="115" y="135" width="515" height="430" fill="none" stroke="#777" stroke-width="24"/><path d="M590 300L760 230L760 420L530 620L330 600Z" fill="#f1f1f1"/><path d="M722 250L722 400L610 492L572 425Z" fill="#777"/><path d="M562 442L616 492L545 558L494 505Z" fill="#777"/><path d="M245 715C300 650 370 560 430 540C490 520 545 570 530 620C515 670 470 705 420 712C350 720 290 718 245 715Z" fill="#4a80bf"/><path d="M395 605C410 575 450 560 480 575C505 590 505 625 490 650C460 640 420 625 395 605Z" fill="#fff"/></svg>
<svg style="position:absolute;left:905px;top:58px" width="40" height="36" viewBox="0 0 853 768"><rect x="120" y="140" width="530" height="440" fill="#fff"/><rect x="235" y="250" width="275" height="195" fill="#c5d9ee"/><path d="M225 130V590M520 130V590M110 240H660M110 455H660" stroke="#aaa" stroke-width="22"/><rect x="115" y="135" width="540" height="450" fill="none" stroke="#777" stroke-width="24"/><path d="M590 300L760 230L760 420L530 620L330 600Z" fill="#f1f1f1"/><path d="M722 250L722 400L610 492L572 425Z" fill="#777"/><path d="M562 442L616 492L545 558L494 505Z" fill="#777"/><path d="M245 715C300 650 370 560 430 540C490 520 545 570 530 620C515 670 470 705 420 712C350 720 290 718 245 715Z" fill="#4a80bf"/><path d="M395 605C410 575 450 560 480 575C505 590 505 625 490 650C460 640 420 625 395 605Z" fill="#fff"/></svg>
<span class="t" style="left:777.45px;top:105.00px;font-size:12px;color:#444444;transform:scaleX(1.0517);transform-origin:left;">Conditional</span>
<span class="t" style="left:774.46px;top:121.00px;font-size:12px;color:#444444;transform:scaleX(1.0357);transform-origin:left;">Formatting</span>
<svg style="position:absolute;left:837px;top:119px;" width="6" height="4" viewBox="0 0 6 4"><path d="M0 0.5H6L3 3.5Z" fill="#666"/></svg>
<span class="t" style="left:846.54px;top:105.00px;font-size:12px;color:#444444;transform:scaleX(0.9623);transform-origin:left;">Format as</span>
<span class="t" style="left:856.20px;top:121.00px;font-size:12px;color:#444444;transform:scaleX(0.9821);transform-origin:left;">Table</span>
<svg style="position:absolute;left:887px;top:119px;" width="6" height="4" viewBox="0 0 6 4"><path d="M0 0.5H6L3 3.5Z" fill="#666"/></svg>
<span class="t" style="left:912.50px;top:105.00px;font-size:12px;color:#444444;">Cell</span>
<span class="t" style="left:903.03px;top:121.00px;font-size:12px;color:#444444;transform:scaleX(0.9677);transform-origin:left;">Styles</span>
<svg style="position:absolute;left:937px;top:119px;" width="6" height="4" viewBox="0 0 6 4"><path d="M0 0.5H6L3 3.5Z" fill="#666"/></svg>
<svg style="position:absolute;left:958px;top:60px" width="40" height="36" viewBox="0 0 853 768"><rect x="97" y="97" width="300" height="108" fill="#fff" stroke="#777" stroke-width="24"/><path d="M245 90V212" stroke="#777" stroke-width="20"/><rect x="330" y="267" width="300" height="108" fill="#c5d9ee" stroke="#777" stroke-width="24"/><path d="M478 260V382" stroke="#777" stroke-width="20"/><path d="M120 318H255M180 265L125 318L180 372" fill="none" stroke="#3e7fc1" stroke-width="36"/><rect x="97" y="437" width="300" height="215" fill="#fff" stroke="#777" stroke-width="24"/><path d="M245 430V660M90 545H405" stroke="#777" stroke-width="20"/></svg>
<span class="t" style="left:959.01px;top:105.00px;font-size:12px;color:#444444;transform:scaleX(0.9897);transform-origin:left;">Insert</span>
<svg style="position:absolute;left:972px;top:119px;" width="6" height="4" viewBox="0 0 6 4"><path d="M0 0.5H6L3 3.5Z" fill="#666"/></svg>
<svg style="position:absolute;left:998px;top:60px" width="40" height="36" viewBox="0 0 853 768"><rect x="117" y="97" width="300" height="108" fill="#fff" stroke="#777" stroke-width="24"/><path d="M265 90V212" stroke="#777" stroke-width="20"/><path d="M245 267H420V373H245Z" fill="#c5d9ee" stroke="#777" stroke-width="24"/><path d="M420 267L490 318L420 373Z" fill="#c5d9ee"/><path d="M395 260V380" stroke="#777" stroke-width="20"/><path d="M117 675V460H375M117 568H420M265 460V675M117 675H417V490" fill="#fff" stroke="#777" stroke-width="24"/><rect x="125" y="468" width="285" height="200" fill="#fff"/><path d="M117 460H375M117 568H417M265 460V675M117 460V675H417V490" fill="none" stroke="#777" stroke-width="24"/><path d="M440 205L720 480M715 220L420 470" stroke="#e0573a" stroke-width="62" stroke-linecap="round"/></svg>
<span class="t" style="left:999.72px;top:105.00px;font-size:12px;color:#444444;transform:scaleX(0.9788);transform-origin:left;">Delete</span>
<svg style="position:absolute;left:1014px;top:119px;" width="6" height="4" viewBox="0 0 6 4"><path d="M0 0.5H6L3 3.5Z" fill="#666"/></svg>
<svg style="position:absolute;left:1038px;top:60px" width="40" height="36" viewBox="0 0 853 768"><path d="M158 65V165M628 65V165M200 115H590M265 70L210 115L265 160M535 70L590 115L535 160" fill="none" stroke="#3e7fc1" stroke-width="28"/><rect x="160" y="200" width="575" height="425" fill="#fff" stroke="#777" stroke-width="24"/><path d="M308 200V625M478 200V625M630 200V625M160 308H735M160 518H735" stroke="#aaa" stroke-width="20"/><rect x="318" y="318" width="152" height="192" fill="#4a80bf"/><path d="M160 625V690Q160 712 185 712H290L345 655M345 625V690Q345 712 370 712H480L540 640" fill="#fff" stroke="#777" stroke-width="22"/></svg>
<span class="t" style="left:1039.49px;top:105.00px;font-size:12px;color:#444444;transform:scaleX(1.0108);transform-origin:left;">Format</span>
<svg style="position:absolute;left:1057px;top:119px;" width="6" height="4" viewBox="0 0 6 4"><path d="M0 0.5H6L3 3.5Z" fill="#666"/></svg>
<svg style="position:absolute;left:1092px;top:62px;" width="17" height="16" viewBox="0 0 17 16"><path d="M15.5 3V1.5H1.5L8 8L1.5 14.5H15.5V13" fill="none" stroke="#444" stroke-width="2.2"/></svg>
<span class="t" style="left:1112.60px;top:71.00px;font-size:12px;color:#444444;transform:scaleX(0.9939);transform-origin:left;">AutoSum</span>
<svg style="position:absolute;left:1172px;top:69px;" width="6" height="4" viewBox="0 0 6 4"><path d="M0 0.5H6L3 3.5Z" fill="#666"/></svg>
<svg style="position:absolute;left:1094px;top:85px;" width="15" height="16" viewBox="0 0 15 16"><rect x="0.5" y="0.5" width="13.5" height="15" fill="#fff" stroke="#666"/><rect x="0" y="0" width="14.5" height="3.5" fill="#666"/><path d="M7.2 5V12M4 9L7.2 12L10.4 9" fill="none" stroke="#3e7fc1" stroke-width="1.8"/></svg>
<span class="t" style="left:1111.60px;top:94.00px;font-size:12px;color:#444444;">Fill</span>
<svg style="position:absolute;left:1130px;top:92px;" width="6" height="4" viewBox="0 0 6 4"><path d="M0 0.5H6L3 3.5Z" fill="#666"/></svg>
<svg style="position:absolute;left:1093px;top:108px;" width="16" height="15" viewBox="0 0 16 15"><path d="M1.5 10L9 2.5L14 7L7 13.5H4Z" fill="#e8808f"/><path d="M1 10.5L4 13.5" stroke="#d66" stroke-width="1"/><path d="M6 14.5H15" stroke="#555" stroke-width="1"/></svg>
<span class="t" style="left:1111.66px;top:117.00px;font-size:12px;color:#444444;transform:scaleX(0.9393);transform-origin:left;">Clear</span>
<svg style="position:absolute;left:1142px;top:115px;" width="6" height="4" viewBox="0 0 6 4"><path d="M0 0.5H6L3 3.5Z" fill="#666"/></svg>
<span class="t" style="left:1186.76px;top:71.50px;font-size:15px;color:#3e7fc1;font-weight:bold;transform:scaleX(1.2444);transform-origin:left;">A</span>
<span class="t" style="left:1188.70px;top:86.00px;font-size:14.5px;color:#a15fc6;font-weight:bold;transform:scaleX(1.0556);transform-origin:left;">Z</span>
<svg style="position:absolute;left:1200px;top:72px;" width="18" height="15" viewBox="0 0 18 15"><path d="M0.5 0.5H16.5L10.5 6.5V14.5H6.5V6.5Z" fill="#777"/><path d="M7.8 6.8V13.2H9.2V6.8Z" fill="#fff"/></svg>
<span class="t" style="left:1185.15px;top:105.00px;font-size:12px;color:#444444;transform:scaleX(1.0531);transform-origin:left;">Sort &amp;</span>
<span class="t" style="left:1185.53px;top:121.00px;font-size:12px;color:#444444;transform:scaleX(0.9692);transform-origin:left;">Filter</span>
<svg style="position:absolute;left:1215px;top:119px;" width="6" height="4" viewBox="0 0 6 4"><path d="M0 0.5H6L3 3.5Z" fill="#666"/></svg>
<svg style="position:absolute;left:1231px;top:63px;" width="30" height="29" viewBox="0 0 30 29"><circle cx="18" cy="11" r="8" fill="#fff" stroke="#4a80bf" stroke-width="2.6"/><path d="M12.5 16.5L4 25" stroke="#4a80bf" stroke-width="3.4" stroke-linecap="round"/></svg>
<span class="t" style="left:1227.68px;top:105.00px;font-size:12px;color:#444444;transform:scaleX(1.0206);transform-origin:left;">Find &amp;</span>
<span class="t" style="left:1225.04px;top:121.00px;font-size:12px;color:#444444;transform:scaleX(0.9625);transform-origin:left;">Select</span>
<svg style="position:absolute;left:1260px;top:119px;" width="6" height="4" viewBox="0 0 6 4"><path d="M0 0.5H6L3 3.5Z" fill="#666"/></svg>
<span class="t" style="left:11.23px;top:173.00px;font-size:12px;color:#333;transform:scaleX(1.1733);transform-origin:left;">I18</span>
<svg style="position:absolute;left:92px;top:168px;" width="8" height="5" viewBox="0 0 8 5"><path d="M0 0.5H8L4 4.5Z" fill="#666"/></svg>
<div style="left:121px;top:167px;width:2px;height:2px;background:#a0a0a0"></div>
<div style="left:121px;top:171px;width:2px;height:2px;background:#a0a0a0"></div>
<div style="left:121px;top:175px;width:2px;height:2px;background:#a0a0a0"></div>
<svg style="position:absolute;left:150px;top:167px;" width="12" height="11" viewBox="0 0 12 11"><path d="M1 0.5L11 10.5M11 0.5L1 10.5" stroke="#ababab" stroke-width="1.6"/></svg>
<svg style="position:absolute;left:185px;top:166px;" width="15" height="12" viewBox="0 0 15 12"><path d="M1 6.5L5 10.5L14 1" fill="none" stroke="#c8c8c8" stroke-width="2"/></svg>
<span class="t" style="left:222px;top:172px;font-size:13px;color:#555;font-family:'Liberation Serif';font-style:italic;font-weight:bold">f<span style="font-size:10px">x</span></span>
<svg style="position:absolute;left:1348px;top:168px;" width="9" height="6" viewBox="0 0 9 6"><path d="M1 5L4.5 1.5L8 5" fill="none" stroke="#666" stroke-width="1.8"/></svg>
<svg style="position:absolute;left:10px;top:219px;" width="13" height="13" viewBox="0 0 13 13"><path d="M12 0V12H0Z" fill="#b4b4b4"/></svg>
<div style="left:1344px;top:234px;width:1px;height:444px;background:#a0a0a0"></div>
<div style="left:1345px;top:215px;width:21px;height:463px;background:#e6e6e6"></div>
<div style="left:1348px;top:217px;width:15px;height:15px;background:#fff;border:1px solid #a6a6a6"></div>
<svg style="position:absolute;left:1352px;top:222px;" width="7" height="4" viewBox="0 0 7 4"><path d="M0 4H7L3.5 0Z" fill="#666"/></svg>
<div style="left:1348px;top:232px;width:15px;height:412px;background:#fff;border:1px solid #a6a6a6"></div>
<div style="left:1348px;top:644px;width:15px;height:20px;background:#dcdcdc"></div>
<div style="left:1348px;top:664px;width:15px;height:14px;background:#fff;border:1px solid #a6a6a6"></div>
<svg style="position:absolute;left:1352px;top:669px;" width="7" height="4" viewBox="0 0 7 4"><path d="M0 0H7L3.5 4Z" fill="#666"/></svg>
<div style="left:0px;top:678px;width:1366px;height:28px;background:#e6e6e6"></div>
<div style="left:0px;top:678px;width:1345px;height:1px;background:#9e9e9e"></div>
<div style="left:0px;top:706px;width:1366px;height:1px;background:#c6c6c6"></div>
<div style="left:100px;top:678px;width:65px;height:25px;background:#fff;border-left:1px solid #b0b0b0;border-right:1px solid #b0b0b0;border-top:0"></div>
<div style="left:100px;top:701px;width:65px;height:2px;background:#217346"></div>
<span class="t" style="left:111.10px;top:692.00px;font-size:13px;color:#1e6b41;font-weight:bold;transform:scaleX(0.9951);transform-origin:left;">Sheet1</span>
<svg style="position:absolute;left:26px;top:688px;" width="6" height="8" viewBox="0 0 6 8"><path d="M5 0V8L0.5 4Z" fill="#b8b8b8"/></svg>
<svg style="position:absolute;left:55px;top:688px;" width="6" height="8" viewBox="0 0 6 8"><path d="M1 0V8L5.5 4Z" fill="#b8b8b8"/></svg>
<svg style="position:absolute;left:197px;top:683px;" width="18" height="18" viewBox="0 0 18 18"><circle cx="9" cy="9" r="7.6" fill="none" stroke="#777" stroke-width="1.2"/><path d="M9 5V13M5 9H13" stroke="#666" stroke-width="1.8"/></svg>
<div style="left:819px;top:686px;width:2px;height:2px;background:#b0b0b0"></div>
<div style="left:819px;top:690px;width:2px;height:2px;background:#b0b0b0"></div>
<div style="left:819px;top:694px;width:2px;height:2px;background:#b0b0b0"></div>
<div style="left:836px;top:685px;width:15px;height:15px;background:#fff;border:1px solid #a6a6a6"></div>
<svg style="position:absolute;left:840px;top:689px;" width="5" height="7" viewBox="0 0 5 7"><path d="M4.5 0V7L0.5 3.5Z" fill="#666"/></svg>
<div style="left:850px;top:685px;width:448px;height:15px;background:#fff;border:1px solid #a6a6a6"></div>
<div style="left:1298px;top:685px;width:32px;height:15px;background:#dcdcdc"></div>
<div style="left:1330px;top:685px;width:15px;height:15px;background:#fff;border:1px solid #a6a6a6"></div>
<svg style="position:absolute;left:1335px;top:689px;" width="5" height="7" viewBox="0 0 5 7"><path d="M0.5 0V7L4.5 3.5Z" fill="#666"/></svg>
<div style="left:0px;top:707px;width:1366px;height:21px;background:#f1f1f1"></div>
<span class="t" style="left:6.45px;top:717.00px;font-size:11.5px;color:#444;transform:scaleX(0.9500);transform-origin:left;">Ready</span>
<div style="left:1074px;top:706px;width:38px;height:22px;background:#d4d4d4"></div>
<svg style="position:absolute;left:1086px;top:710px;" width="14" height="13" viewBox="0 0 14 13"><rect x="0.5" y="0.5" width="13" height="12" fill="none" stroke="#666"/><path d="M0.5 4.5H13.5M0.5 8.5H13.5M4.5 0.5V12.5M9.5 0.5V12.5" stroke="#666"/></svg>
<svg style="position:absolute;left:1123px;top:710px;" width="15" height="13" viewBox="0 0 15 13"><rect x="0.5" y="0.5" width="14" height="12" fill="none" stroke="#666"/><rect x="3.5" y="2.5" width="8" height="8" fill="none" stroke="#666"/><path d="M5 4.5H10M5 6.5H10M5 8.5H10" stroke="#666"/></svg>
<svg style="position:absolute;left:1161px;top:710px;" width="15" height="13" viewBox="0 0 15 13"><path d="M0.5 0.5H14.5V12.5H0.5Z" fill="none" stroke="#666"/><path d="M4.5 0.5V6.5M8.5 0.5V6.5M0.5 6.5H8.5" stroke="#666"/></svg>
<div style="left:1193px;top:715px;width:6px;height:2px;background:#555"></div>
<div style="left:1203px;top:716px;width:100px;height:1px;background:#999"></div>
<div style="left:1251px;top:710px;width:5px;height:12px;background:#666"></div>
<div style="left:1306px;top:715px;width:9px;height:2px;background:#555"></div>
<div style="left:1309.5px;top:711.5px;width:2px;height:9px;background:#555"></div>
<span class="t" style="left:1328.64px;top:717.00px;font-size:11.5px;color:#444;transform:scaleX(0.9643);transform-origin:left;">100%</span>
<div style="left:0;top:728px;width:1366px;height:40px;background:linear-gradient(#1b222c,#0b1017 30%,#0b1017)"></div>
<div style="left:0px;top:728px;width:1366px;height:1px;background:#4a525c"></div>
<div style="left:60px;top:729px;width:58px;height:38px;background:linear-gradient(155deg,#8a8c8e 0%,#3a3d41 35%,#1c1f23 55%,#1a1d21 100%);border:1px solid #6a6d70;border-radius:3px"></div>
<div style="left:370px;top:729px;width:58px;height:38px;background:linear-gradient(155deg,#8a8c8e 0%,#3a3d41 35%,#1c1f23 55%,#1a1d21 100%);border:1px solid #6a6d70;border-radius:3px"></div>
<div style="left:432px;top:729px;width:58px;height:38px;background:linear-gradient(155deg,#8a8c8e 0%,#3a3d41 35%,#1c1f23 55%,#1a1d21 100%);border:1px solid #6a6d70;border-radius:3px"></div>
<div style="left:494px;top:729px;width:58px;height:38px;background:linear-gradient(155deg,#c8c8c8 0%,#8a8a8a 35%,#555 55%,#4a4a4a 100%);border:1px solid #c0c0c0;border-radius:3px"></div>
<svg style="position:absolute;left:0px;top:726px" width="60" height="42" viewBox="0 0 631 441"><defs><linearGradient id="og" x1="0" y1="0" x2="0" y2="1"><stop offset="0" stop-color="#9cd0ee"/><stop offset="0.45" stop-color="#4a8fc4"/><stop offset="0.5" stop-color="#1e5c9a"/><stop offset="0.85" stop-color="#1a6cb0"/><stop offset="1" stop-color="#30c8f0"/></linearGradient></defs><circle cx="285" cy="232" r="190" fill="url(#og)" stroke="#4a5a6a" stroke-width="14"/><path d="M195 135Q245 110 300 130L285 215Q235 195 180 215Z" fill="#f0642a"/><path d="M300 145Q350 170 410 150L390 240Q340 260 285 235Z" fill="#8cc04a"/><path d="M178 222Q230 205 280 225L262 315Q215 295 160 315Z" fill="#3aa6e6"/><path d="M282 240Q335 265 385 250L368 335Q320 355 265 330Z" fill="#fcc02a"/></svg>
<svg style="position:absolute;left:0px;top:726px" width="130" height="42" viewBox="0 0 1366 441"><defs><radialGradient id="ffg" cx="0.55" cy="0.3" r="0.75"><stop offset="0" stop-color="#ffe14a"/><stop offset="0.35" stop-color="#ffa02a"/><stop offset="0.7" stop-color="#ff4a3a"/><stop offset="1" stop-color="#e8207a"/></radialGradient></defs><path d="M800 170Q830 120 860 130Q870 150 880 130Q930 90 975 65Q1000 120 1060 170Q1100 230 1090 290Q1070 370 960 390Q850 395 790 320Q760 260 780 210Z" fill="url(#ffg)"/><path d="M975 65Q1070 140 1090 260Q1060 190 1000 160Q960 120 975 65Z" fill="#ffd93a"/><circle cx="935" cy="235" r="68" fill="#7a3ee0"/><path d="M870 200Q900 150 960 160Q990 170 1000 200Q960 180 920 200Q890 215 880 240Z" fill="#b04ae0"/><path d="M800 230Q830 170 880 185Q900 195 920 215Q870 200 840 230Z" fill="#ffb52a"/></svg>
<svg style="position:absolute;left:136px;top:736px;" width="28" height="25" viewBox="0 0 28 25"><rect x="6" y="1" width="20" height="23" fill="#8cc3e8" stroke="#5a8fb8"/><rect x="2" y="3" width="20" height="21" fill="#a8d4f2" stroke="#5a8fb8"/><circle cx="12.5" cy="13" r="8.5" fill="#f07a1a"/><path d="M9.5 8.5V17.5L17 13Z" fill="#fff"/></svg>
<svg style="position:absolute;left:190px;top:728px" width="46" height="40" viewBox="0 0 883 768"><defs><linearGradient id="ieg" x1="0" y1="0" x2="0" y2="1"><stop offset="0" stop-color="#3aa8e8"/><stop offset="0.5" stop-color="#8ee0fa"/><stop offset="1" stop-color="#3ab0ec"/></linearGradient></defs><circle cx="470" cy="390" r="255" fill="url(#ieg)"/><path d="M345 330C360 260 420 230 470 230C530 230 575 270 580 330Z" fill="#0b1017"/><path d="M345 430H720C700 560 600 640 480 640C450 640 420 630 400 620C380 560 360 500 345 430Z" fill="#0b1017"/><path d="M350 430H720V470H380Z" fill="#0b1017"/><path d="M340 420C400 520 480 540 560 520C620 505 660 480 700 460C690 560 600 640 480 640C400 640 340 560 340 420Z" fill="url(#ieg)"/><path d="M250 640C120 640 180 480 300 330C420 190 600 60 690 110C730 140 700 200 690 220C700 160 660 120 560 160C440 210 300 370 240 480C200 560 210 620 290 620Z" fill="#f7c21a"/></svg>
<svg style="position:absolute;left:258px;top:734px;" width="34" height="29" viewBox="0 0 34 29"><path d="M1 4H12L14 6H32V26H1Z" fill="#e9c46a"/><rect x="3" y="2" width="28" height="12" fill="#fff6d8"/><rect x="4" y="2" width="3" height="3" fill="#38b44a"/><rect x="13" y="4" width="3" height="3" fill="#d33"/><rect x="21" y="5" width="4" height="3" fill="#2a9ee8"/><path d="M1 9H33V27H1Z" fill="#f3d98a"/><path d="M6 18H26V28H22V22H10V28H6Z" fill="#8fd0f5" stroke="#4a9ad2"/></svg>
<svg style="position:absolute;left:321px;top:732px;" width="32" height="32" viewBox="0 0 32 32"><path d="M16 16L3.01 8.5A15 15 0 0 1 28.99 8.5Z" fill="#db4437"/><path d="M16 16L28.99 8.5A15 15 0 0 1 16 31Z" fill="#fcc934"/><path d="M16 16L16 31A15 15 0 0 1 3.01 8.5Z" fill="#1ea362"/><circle cx="16" cy="16" r="7.2" fill="#fff"/><circle cx="16" cy="16" r="5.6" fill="#4a8af4"/></svg>
<svg style="position:absolute;left:384px;top:734px;" width="34" height="28" viewBox="0 0 34 28"><path d="M1 9L12 3L16 18L6 23Z" fill="#9ed88c"/><path d="M7 7H20V22H7Z" fill="#a9dcf5"/><path d="M13 6L30 10L26 26L10 22Z" fill="#fce57a" stroke="#e9c94a" stroke-width="0.8"/></svg>
<svg style="position:absolute;left:445px;top:732px;" width="32" height="32" viewBox="0 0 32 32"><path d="M12 5H30V27H12Z" fill="#fff" stroke="#2b579a"/><path d="M15 9H28M15 12H28M15 15H28M15 18H28M15 21H28" stroke="#2b579a" stroke-width="1.2"/><path d="M0 4L19 0V32L0 28Z" fill="#2b579a"/><text x="2" y="21" font-family="Liberation Sans" font-weight="bold" font-size="13" fill="#fff">W</text></svg>
<svg style="position:absolute;left:507px;top:732px;" width="32" height="32" viewBox="0 0 32 32"><path d="M12 5H30V27H12Z" fill="#fff" stroke="#217346"/><path d="M15 9H28M15 12H28M15 15H28M15 18H28M15 21H28M21 7V25" stroke="#217346" stroke-width="1.2"/><path d="M0 4L19 0V32L0 28Z" fill="#217346"/><text x="4.5" y="21" font-family="Liberation Sans" font-weight="bold" font-size="14" fill="#fff">X</text></svg>
<svg style="position:absolute;left:1164px;top:745px;" width="9" height="6" viewBox="0 0 9 6"><path d="M0 6H9L4.5 0Z" fill="#fff"/></svg>
<svg style="position:absolute;left:1185px;top:741px;" width="16" height="16" viewBox="0 0 16 16"><path d="M1 5.5H4L8 2V14L4 10.5H1Z" fill="#fff"/><path d="M10 5.5C11 6.5 11 9.5 10 10.5M12 3.5C14 5.5 14 10.5 12 12.5" fill="none" stroke="#fff" stroke-width="1.2"/></svg>
<svg style="position:absolute;left:1209px;top:740px;" width="15" height="18" viewBox="0 0 15 18"><rect x="1" y="4" width="10" height="12" fill="none" stroke="#fff" stroke-width="1.5"/><path d="M6 5V1M9 5V1" stroke="#fff"/><rect x="6" y="6" width="8" height="6" fill="#fff"/><path d="M14 9H15" stroke="#fff"/></svg>
<svg style="position:absolute;left:1233px;top:743px;" width="16" height="14" viewBox="0 0 16 14"><rect x="1" y="11" width="2" height="2" fill="#fff"/><rect x="4" y="9" width="2" height="4" fill="#fff"/><rect x="7" y="7" width="2" height="6" fill="#fff"/><rect x="10" y="4" width="2" height="9" fill="#fff"/><rect x="13" y="1" width="2" height="12" fill="#fff"/></svg>
<svg style="position:absolute;left:1255px;top:740px;" width="19" height="19" viewBox="0 0 19 19"><path d="M2 1V18" stroke="#fff" stroke-width="1.5"/><path d="M3 2H12V9H3Z" fill="#fff"/><circle cx="13" cy="13" r="5" fill="#e81123"/><path d="M11 11L15 15M15 11L11 15" stroke="#fff" stroke-width="1.4"/></svg>
<span class="t" style="left:1292.96px;top:742.00px;font-size:12px;color:#fff;transform:scaleX(1.0357);transform-origin:left;">2:08 AM</span>
<span class="t" style="left:1287.99px;top:759.00px;font-size:12px;color:#fff;transform:scaleX(1.0115);transform-origin:left;">1/29/2020</span>
<div style="left:1352px;top:729px;width:14px;height:39px;background:linear-gradient(160deg,#6a7078,#1a1f26 40%,#15191f);border:1px solid #6a7078;border-right:0"></div>
</body></html>
